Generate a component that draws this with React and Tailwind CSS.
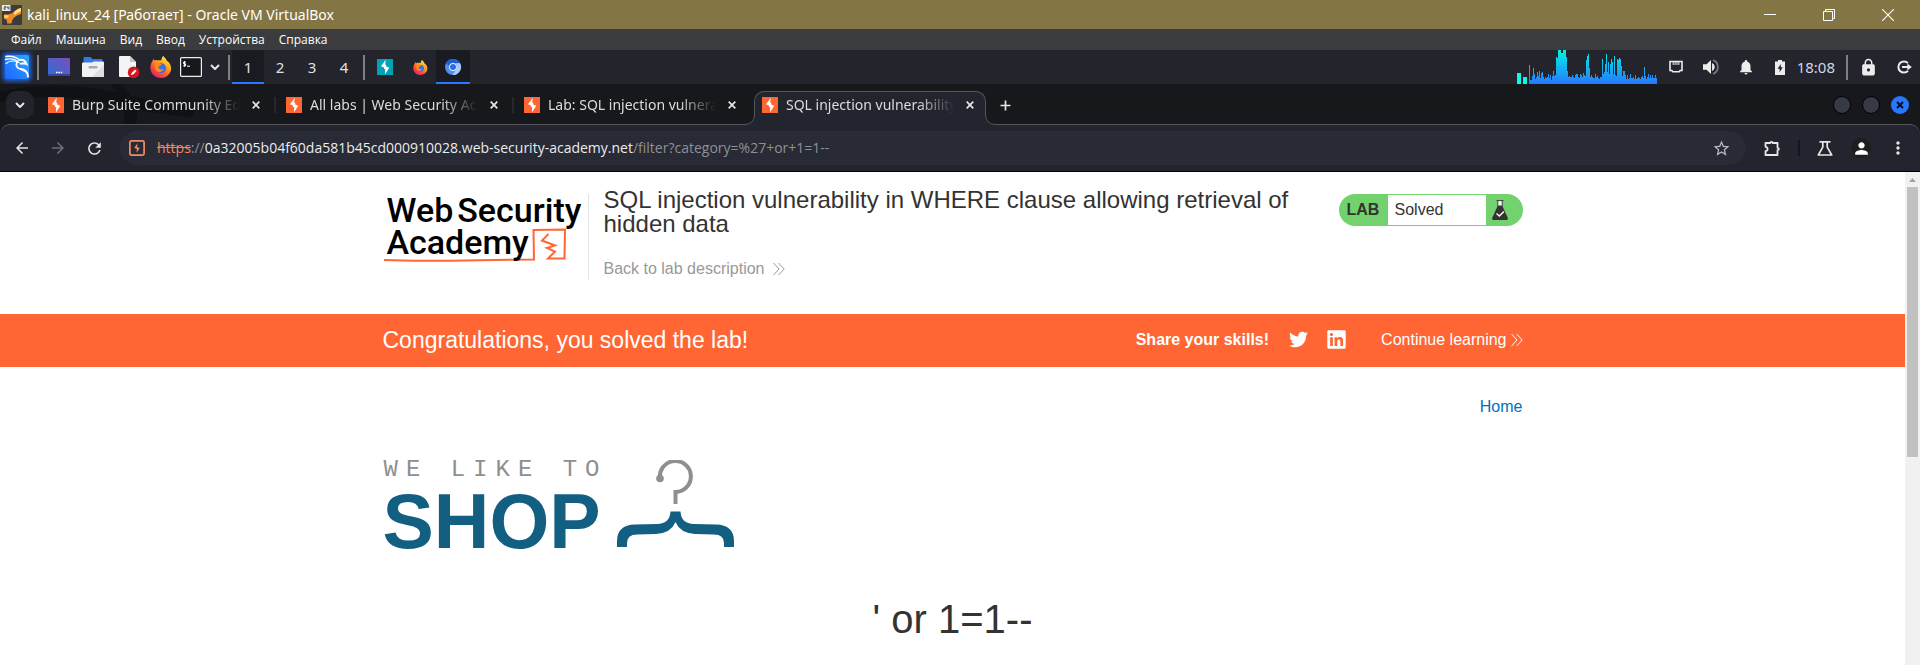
import React from "react";
import { FaTwitter, FaLinkedin } from "react-icons/fa";
import {
  MdArrowBack,
  MdArrowForward,
  MdRefresh,
  MdStarBorder,
  MdMoreVert,
  MdPerson,
  MdNotifications,
  MdLock,
} from "react-icons/md";

function BurpIcon({ bg, bolt = "#fff" }) {
  return (
    <svg width="16" height="16" viewBox="0 0 16 16" className="shrink-0" aria-hidden="true">
      <rect width="16" height="16" fill={bg} />
      <path d="M8.7 0.8 L4 7.2 L7 8.6 L7 10 L8.2 10 L8 15.2 L12.3 8.8 L9.2 7.4 L9.2 6 L8.2 5.6 Z" fill={bolt} />
    </svg>
  );
}

function VirtualBoxIcon() {
  return (
    <svg width="20" height="20" viewBox="0 0 20 20" className="shrink-0" aria-hidden="true">
      <rect width="20" height="20" rx="1" fill="#3d3a3a" />
      <path d="M19 3 C14 4 13 6 10.5 8 C8.5 9 6 9.5 2 9.5 L2 14 C5 14 5.5 16 5 18.5 L9.5 18.5 C10 15 11 13 13.5 11.5 C15.5 10 17 9.5 19 9 Z" fill="#f08a24" />
      <path d="M19 3 C15 4 14 5.5 11.5 8 L13 10 C15 8 17 7 19 6.5 Z" fill="#ffe07a" />
      <path d="M2 10 L7 10.5 L5.5 13 L2 12.5 Z" fill="#ffcf6a" />
      <rect x="0" y="0" width="8.5" height="6" fill="#e9ecef" />
      <path d="M2 1.6h1.6v1.2h-1.6v1.4h1.8M5.2 1.4v1.6h1.8v1.6M7 1.4v1.6" stroke="#384048" strokeWidth=".8" fill="none" />
    </svg>
  );
}

function KaliIcon() {
  return (
    <svg width="34" height="34" viewBox="0 0 34 34" aria-hidden="true">
      <defs>
        <linearGradient id="kali" x1="1" y1="0" x2="0" y2="1">
          <stop offset="0" stopColor="#2aa6ff" />
          <stop offset="1" stopColor="#1f66ff" />
        </linearGradient>
        <filter id="glow" x="-30%" y="-30%" width="160%" height="160%">
          <feGaussianBlur stdDeviation="2" />
        </filter>
      </defs>
      <rect x="3" y="3" width="28" height="28" rx="4" fill="#1b6dff" opacity=".9" filter="url(#glow)" />
      <rect x="5" y="5" width="24" height="24" rx="2" fill="url(#kali)" />
      <g fill="none" stroke="#fff" strokeLinecap="round">
        <path d="M6 6.500 C11 5.800 16 7 19.5 10" strokeWidth="1.600" />
        <path d="M5.500 9.500 C10 8.300 15 9 18 11.500" strokeWidth="1.300" />
        <path d="M6 13.500 C9 10.800 14 10.400 19 12.400" strokeWidth="1.100" />
        <path d="M19 10 C23 9 25.5 11 26.5 14 C24.5 13 22.5 13.8 20.5 13.600" strokeWidth="1.900" />
        <path d="M17 12 C15.5 16 17 18.6 21 19 C25 19.4 27.600 22 28 26.500" strokeWidth="1.900" />
        <path d="M20 19 C23 21 25.500 22 27.500 22.500" strokeWidth="1" />
      </g>
    </svg>
  );
}

function FirefoxIcon({ size }) {
  return (
    <svg width={size} height={size} viewBox="0 0 22 22" aria-hidden="true">
      <defs>
        <linearGradient id="ffx" x1=".85" y1=".05" x2=".2" y2="1">
          <stop offset="0" stopColor="#fff04f" />
          <stop offset=".35" stopColor="#ffa320" />
          <stop offset=".7" stopColor="#ff4a37" />
          <stop offset="1" stopColor="#e3157b" />
        </linearGradient>
      </defs>
      <path d="M13.2 0 C15 1.6 16.4 3.2 16.9 5 C18.4 5.6 19.4 7 19.9 8 C21 10 21.4 12 21 14 C20 18.6 16 22 11 22 C5 22 .6 17.8 .4 12 C.3 9 1.4 6.6 2.6 5 L3 3 L4.8 4.6 C6 3.8 7 4 8 4.6 C9.4 3.6 10.4 4.6 11.4 4.2 C11.4 2.4 12.2 1 13.2 0Z" fill="url(#ffx)" />
      <circle cx="11.2" cy="12.2" r="4.9" fill="#3e6fe0" />
      <path d="M5 7.4 C7 6.6 9 7.4 11.6 8.2 C11 10 9 9.6 8.4 11 C8.6 13.4 11 14 13.4 13 C12.6 16 8.6 17.4 6 14.4 C4.6 12.4 4.4 9.6 5 7.4Z" fill="#ff8a1e" />
    </svg>
  );
}

function ChromiumIcon() {
  return (
    <svg width="16" height="16" viewBox="0 0 16 16" aria-hidden="true">
      <circle cx="8" cy="8" r="8" fill="#4f8df0" />
      <path d="M8 0 A8 8 0 0 1 15 4.2 L8 4.2 A4 4 0 0 0 4.2 7.2 L1 4.2 A8 8 0 0 1 8 0Z" fill="#1f5fd0" />
      <path d="M15 4.2 A8 8 0 0 1 7.6 16 L11.4 10 A4 4 0 0 0 10.6 4.2Z" fill="#a9cbfb" />
      <circle cx="8" cy="8" r="3.9" fill="#e8f0fe" />
      <circle cx="8" cy="8" r="3" fill="#2a6be0" />
    </svg>
  );
}

function DesktopIcon() {
  return (
    <svg width="22" height="18" viewBox="0 0 22 18" aria-hidden="true">
      <defs>
        <linearGradient id="desk" x1="0" y1="1" x2="1" y2="0">
          <stop offset="0" stopColor="#2f6fd8" />
          <stop offset="1" stopColor="#7a4fb8" />
        </linearGradient>
      </defs>
      <rect width="22" height="18" rx="1" fill="url(#desk)" />
      <rect y="16" width="22" height="2" fill="#3d3f9c" />
      <path d="M8 14.5h1.6M10.4 14.5h1.6M12.8 14.5h1.4" stroke="#fff" strokeWidth="1.4" />
    </svg>
  );
}

function FolderIcon() {
  return (
    <svg width="22" height="20" viewBox="0 0 22 20" aria-hidden="true">
      <path d="M1.5 1 Q1.5 0 2.5 0 H8.5 L10.5 2 H19.5 Q20.5 2 20.5 3 V8 H1.5Z" fill="#3578ea" />
      <path d="M0 6.5 Q0 5.5 1 5.5 H10 L12 4.5 H21 Q22 4.5 22 5.5 V19 Q22 20 21 20 H1 Q0 20 0 19Z" fill="#f1f1f1" />
      <path d="M22 8 V19 Q22 20 21 20 H10Z" fill="#dedede" />
      <rect x="6.5" y="9" width="9" height="2.4" rx="1" fill="#a9a9a9" />
    </svg>
  );
}

function DocumentIcon() {
  return (
    <svg width="22" height="23" viewBox="0 0 22 23" aria-hidden="true">
      <path d="M1 1 Q1 0 2 0 H12 L18 6 V20 Q18 21 17 21 H2 Q1 21 1 20Z" fill="#f4f4f4" />
      <path d="M12 0 L18 6 H12Z" fill="#c4c4c4" />
      <circle cx="15.6" cy="16.4" r="5.8" fill="#d8141c" />
      <path d="M13 19 L13.6 16.9 L17 13.5 L18.6 15 L15.2 18.4Z" fill="#fff" />
    </svg>
  );
}

function TerminalIcon() {
  return (
    <svg width="22" height="20" viewBox="0 0 22 20" aria-hidden="true">
      <rect x=".6" y=".6" width="20.8" height="18.8" rx="1" fill="#17181c" stroke="#eee" strokeWidth="1.2" />
      <path d="M5.8 5 H3.6 V6.8 H5.6 V8.8 H3.2 M4.6 4 V9.8 M7 9.2 H10" stroke="#fff" strokeWidth="1" fill="none" />
    </svg>
  );
}

function Chevron({ className }) {
  return (
    <svg width="10" height="6" viewBox="0 0 10 6" className={className} aria-hidden="true">
      <path d="M1 1 L5 5 L9 1" fill="none" stroke="#e6e6e6" strokeWidth="2" />
    </svg>
  );
}

function DoubleArrow({ className }) {
  return (
    <svg width="12" height="14" viewBox="0 0 12 14" className={className} aria-hidden="true">
      <path d="M.6 1 L6 7 L.6 13 M5.6 1 L11.2 7 L5.6 13" fill="none" stroke="currentColor" strokeWidth="1" />
    </svg>
  );
}

const LOAD = [
  19, 4, 4, 8, 16, 10, 5, 7, 12, 8, 13, 6, 11, 12, 7, 5, 7, 6, 7, 10, 6, 9, 4, 8, 13, 8, 9, 27, 26, 34, 34, 34, 31, 31, 34, 34, 34, 27, 13, 7, 8,
  7, 7, 9, 7, 6, 9, 10, 10, 7, 6, 10, 9, 7, 11, 9, 8, 24, 28, 30, 16, 7, 9, 7, 6, 6, 10, 7, 8, 6, 5, 7, 7, 25, 10, 12, 20, 30, 12, 22, 10, 20, 25,
  22, 10, 28, 9, 8, 25, 24, 26, 25, 18, 8, 13, 13, 9, 5, 9, 5, 6, 10, 6, 6, 7, 5, 9, 5, 6, 7, 6, 5, 7, 8, 6, 17, 8, 5, 7, 10, 6, 9, 6, 9, 6, 6, 9, 6,
];

function LoadGraph() {
  return (
    <svg width="140" height="34" viewBox="0 0 140 34" aria-hidden="true">
      <defs>
        <linearGradient id="load" gradientUnits="userSpaceOnUse" x1="0" y1="0" x2="0" y2="34">
          <stop offset="0" stopColor="#00f5e0" />
          <stop offset="1" stopColor="#2777ff" />
        </linearGradient>
      </defs>
      <rect x="0" y="23" width="4" height="11" fill="#00ffe5" />
      <rect x="6" y="27" width="4" height="7" fill="#00ffe5" />
      <path d={LOAD.map((h, i) => `M${12 + i} 34v${-h}h1v${h}z`).join("")} fill="url(#load)" shapeRendering="crispEdges" />
    </svg>
  );
}

function TitleBar() {
  return (
    <header className="flex h-[29px] items-center justify-between bg-[#847545] pl-0.5 text-white">
      <div className="flex items-center gap-[5px]">
        <VirtualBoxIcon />
        <span className="font-['Noto_Sans',sans-serif] text-[14px] leading-5">kali_linux_24 [Работает] - Oracle VM VirtualBox</span>
      </div>
      <div className="flex h-full pr-[3px]">
        <button aria-label="Minimize" className="flex w-[59px] items-center justify-center">
          <svg width="12" height="12" viewBox="0 0 12 12"><path d="M0 5.5h12" stroke="#fff" /></svg>
        </button>
        <button aria-label="Restore" className="flex w-[59px] items-center justify-center">
          <svg width="12" height="12" viewBox="0 0 12 12" fill="none" stroke="#fff"><path d="M.5 2.5h9v9h-9zM2.5 2.5v-2h9v9h-2" /></svg>
        </button>
        <button aria-label="Close" className="flex w-[59px] items-center justify-center">
          <svg width="12" height="12" viewBox="0 0 12 12"><path d="M0 0L12 12M12 0L0 12" stroke="#fff" strokeWidth="1.1" /></svg>
        </button>
      </div>
    </header>
  );
}

const MENU = ["Файл", "Машина", "Вид", "Ввод", "Устройства", "Справка"];

function MenuBar() {
  return (
    <nav className="flex h-[21px] items-center gap-[14px] bg-[#3b3c3d] pl-[11px] font-['Open_Sans',sans-serif] text-[12px] leading-4 text-white">
      {MENU.map((m) => (
        <button key={m}>{m}</button>
      ))}
    </nav>
  );
}

function Divider() {
  return <span className="h-[25px] w-0.5 shrink-0 bg-[#808083]" />;
}

function Panel() {
  return (
    <div className="flex h-[34px] items-center justify-between bg-[#23242c] font-['Noto_Sans',sans-serif] text-[15px] text-[#e0e0e0]">
      <div className="flex h-full items-center">
        <button aria-label="Applications" className="w-[37px]"><KaliIcon /></button>
        <Divider />
        <div className="flex items-center gap-2 pr-2 pl-[9px]">
          <button aria-label="Show desktop" className="mr-1"><DesktopIcon /></button>
          <button aria-label="Files" className="mr-1.5"><FolderIcon /></button>
          <button aria-label="Text editor" className="mr-0.5"><DocumentIcon /></button>
          <button aria-label="Firefox"><FirefoxIcon size={22} /></button>
          <button aria-label="Terminal"><TerminalIcon /></button>
          <button aria-label="More terminals"><Chevron /></button>
        </div>
        <Divider />
        <div className="ml-0.5 flex h-full">
          <button className="w-8 border-b-2 border-[#2777ff] bg-[#191b21] pt-0.5">1</button>
          <button className="w-8">2</button>
          <button className="w-8">3</button>
          <button className="w-8">4</button>
        </div>
        <span className="w-[3px]" />
        <Divider />
        <div className="flex h-full">
          <button aria-label="Burp Suite" className="flex w-10 items-center justify-center"><BurpIcon bg="#00a3b5" /></button>
          <button aria-label="Firefox window" className="flex w-[31px] items-center justify-center"><FirefoxIcon size={15} /></button>
          <button aria-label="Chromium window" className="flex w-[34px] items-center justify-center border-b-2 border-[#2777ff] bg-[#191b21] pt-0.5"><ChromiumIcon /></button>
        </div>
      </div>

      <div className="flex h-full items-center text-[#ececec]">
        <LoadGraph />
        <button aria-label="Network" className="ml-3">
          <svg width="14" height="14" viewBox="0 0 14 14"><path d="M1 1.500h12v9h-1.800l-1 1.300h-6.400l-1-1.300h-1.800z" fill="none" stroke="currentColor" strokeWidth="1.6" /><path d="M4.2 2v3M6.1 2v3M8 2v3M9.9 2v3" stroke="currentColor" /></svg>
        </button>
        <button aria-label="Volume" className="ml-5">
          <svg width="17" height="16" viewBox="0 0 17 16"><path d="M0 5.2h3.6L8 1v14l-4.4-4.2H0z" fill="currentColor" /><path d="M9.6 4.6a4.4 4.4 0 0 1 0 6.8z" fill="currentColor" stroke="currentColor" /><path d="M10 1.2a7.2 7.2 0 0 1 0 13.6" fill="none" stroke="#77787c" strokeWidth="1.8" /></svg>
        </button>
        <button aria-label="Notifications" className="ml-[17px]"><MdNotifications size={18} /></button>
        <button aria-label="Battery" className="ml-5">
          <svg width="10" height="15" viewBox="0 0 10 15"><path d="M3 0h4v1.4h3V15H0V1.4h3z" fill="currentColor" /><path d="M5.8 4L2.6 8.8h2v3.4l3.2-5h-2z" fill="#23242c" /></svg>
        </button>
        <span className="ml-3 text-[#cfd6e4]">18:08</span>
        <span className="w-[11px]" />
        <Divider />
        <button aria-label="Lock" className="ml-[11px]"><MdLock size={19} /></button>
        <button aria-label="Log out" className="mr-2 ml-[19px]">
          <svg width="15" height="14" viewBox="0 0 15 14"><path d="M11 10.9A5.6 5.6 0 1 1 11 3.1" fill="none" stroke="currentColor" strokeWidth="2" /><path d="M5 7h6" stroke="currentColor" strokeWidth="2" /><path d="M10.4 3.4L14.8 7l-4.4 3.6z" fill="currentColor" /></svg>
        </button>
      </div>
    </div>
  );
}

const TABS = [
  { title: "Burp Suite Community Edition" },
  { title: "All labs | Web Security Academy" },
  { title: "Lab: SQL injection vulnerability" },
  { title: "SQL injection vulnerability in WHERE", active: true },
];

function Flare({ className }) {
  return (
    <svg width="11" height="11" viewBox="0 0 11 11" className={className} aria-hidden="true">
      <path d="M0 10.5 Q10.5 10.5 10.5 0 L11 0 V11 H0Z" fill="#23252e" />
      <path d="M0 10.5 Q10.5 10.5 10.5 0" fill="none" stroke="#55565c" />
    </svg>
  );
}

function Tab({ title, active, separated }) {
  return (
    <div
      className={
        active
          ? "relative z-10 -mb-px flex w-[232px] items-center rounded-t-[10px] border border-b-0 border-[#55565c] bg-[#23252e] px-[7px] pb-[7px]"
          : "mr-1.5 flex w-[232px] items-center px-2 pb-[5px]"
      }
    >
      {active && <Flare className="absolute bottom-0 -left-[11px]" />}
      <BurpIcon bg="#ff6633" />
      <a href="#tab" className="ml-2 w-[168px] overflow-hidden whitespace-nowrap text-[#dcdcdc] [mask-image:linear-gradient(to_right,black_78%,transparent)]">
        {title}
      </a>
      <button aria-label="Close tab" className="ml-3">
        <svg width="8" height="8" viewBox="0 0 8 8"><path d="M.7.7L7.3 7.3M7.3.7L.7 7.3" stroke="#e6e6e6" strokeWidth="1.7" /></svg>
      </button>
      {separated && <span className="-mr-3 ml-[14px] h-4 w-0.5 bg-[#262831]" />}
      {active && <Flare className="absolute -right-[11px] bottom-0 -scale-x-100" />}
    </div>
  );
}

function TabStrip() {
  return (
    <div className="relative flex h-10 bg-[#17181c] pt-[7px] pl-1.5 font-['Noto_Sans',sans-serif] text-[14px] leading-5">
      <svg width="210" height="40" viewBox="0 0 210 40" className="absolute top-0 left-0" aria-hidden="true">
        <path d="M0 8 C40 -2 90 0 130 12 L196 24 L192 34 L150 28 C110 18 60 6 0 18Z" fill="#101115" />
        <path d="M120 0 C134 12 140 24 136 40 L124 40 C126 24 122 10 110 0Z" fill="#101115" />
      </svg>
      <button aria-label="Search tabs" className="relative mr-1.5 flex h-7 w-7 items-center justify-center rounded-[10px] bg-[#22242b]">
        <Chevron />
      </button>
      {TABS.map((t, i) => (
        <Tab key={t.title} {...t} separated={i < 2} />
      ))}
      <button aria-label="New tab" className="ml-[14px] flex h-7 items-center">
        <svg width="11" height="11" viewBox="0 0 11 11"><path d="M5.5 .5v10M.5 5.5h10" stroke="#e6e6e6" strokeWidth="1.7" /></svg>
      </button>
      <div className="mr-[11px] ml-auto flex h-7 items-center gap-[11px]">
        <button aria-label="Minimize browser" className="h-[18px] w-[18px] rounded-full border border-black bg-[#363a46]" />
        <button aria-label="Maximize browser" className="h-[18px] w-[18px] rounded-full border border-black bg-[#363a46]" />
        <button aria-label="Close browser" className="flex h-[18px] w-[18px] items-center justify-center rounded-full bg-[#2777ff]">
          <svg width="8" height="8" viewBox="0 0 8 8"><path d="M1 1L7 7M7 1L1 7" stroke="#0b1020" strokeWidth="2" /></svg>
        </button>
      </div>
    </div>
  );
}

function Toolbar() {
  return (
    <div className="bg-[#17181c]">
      <div className="flex h-12 items-center rounded-t-[10px] border-t border-b border-t-[#55565c] border-b-black bg-[#23252e] pr-3 pl-[13px] text-[#e6e6e6]">
        <button aria-label="Back" className="w-9"><MdArrowBack size={18} /></button>
        <button aria-label="Forward" className="w-9 text-[#6f7077]"><MdArrowForward size={18} /></button>
        <button aria-label="Reload" className="w-[35px]"><MdRefresh size={19} /></button>
        <div className="flex h-[34px] min-w-0 flex-1 items-center rounded-full bg-[#282a35] pr-[15px] pl-[9px] font-['Open_Sans',sans-serif] text-[14px] leading-5 whitespace-nowrap">
          <svg width="16" height="16" viewBox="0 0 16 16" className="mr-3 shrink-0" aria-hidden="true">
            <rect x=".9" y=".9" width="14.2" height="14.2" rx="1.5" fill="none" stroke="#f28b66" strokeWidth="1.7" />
            <path d="M8.4 3.2L5.2 8l2.6.8-.2 4 3.2-4.8-2.6-.8z" fill="#f28b66" />
          </svg>
          <a href="#url" className="text-[#8f9097]">
            <span className="text-[#f08560] line-through">https</span>://<span className="text-[#ececec]">0a32005b04f60da581b45cd000910028.web-security-academy.net</span>/filter?category=%27+or+1=1--
          </a>
          <button aria-label="Bookmark" className="ml-auto text-[#b9b9bd]"><MdStarBorder size={19} /></button>
        </div>
        <button aria-label="Extensions" className="ml-[18px]">
          <svg width="17" height="17" viewBox="0 0 17 17"><path d="M1.500 3h4.800c0-1.600 2.400-1.600 2.400 0h4.800v4.800c1.800 0 1.800 2.400 0 2.400v4.800h-12v-3.800c2.800-.4 2.800-4 0-4.400z" fill="none" stroke="currentColor" strokeWidth="1.8" strokeLinejoin="round" /></svg>
        </button>
        <span className="mx-[17px] h-4 w-0.5 bg-[#15161b]" />
        <button aria-label="Labs">
          <svg width="16" height="15" viewBox="0 0 16 15"><path d="M2.5 .9h11M5.800 1v5.200L1.300 14h13.400L10.200 6.200V1" fill="none" stroke="currentColor" strokeWidth="1.7" strokeLinejoin="round" /></svg>
        </button>
        <button aria-label="Profile" className="ml-[18px] flex h-5 w-5 items-center justify-center rounded-full bg-[#1c1d1e] text-white"><MdPerson size={19} /></button>
        <button aria-label="Menu" className="ml-[17px]"><MdMoreVert size={20} /></button>
      </div>
    </div>
  );
}

function AcademyLogo() {
  return (
    <a href="#academy" className="relative block w-[206px] shrink-0 border-r border-[#e3e3e3] pl-1 font-['Roboto',sans-serif] text-[34px] leading-8 font-medium text-black">
      <svg width="190" height="36" viewBox="0 0 190 36" className="absolute top-[34px] left-0" aria-hidden="true">
        <path d="M1 32 C50 34 100 31.500 151 31.500 L150.500 2 L182 1.500 L181.500 30.500 L165 30.500 L172 23.500 L164 20 L172 17.500 L159 12.500 L165.500 6" fill="none" stroke="#ff6633" strokeWidth="2" />
      </svg>
      <span className="relative flex gap-1 whitespace-nowrap">
        <span>Web</span> <span>Security</span>
      </span>
      <span className="relative block">Academy</span>
    </a>
  );
}

function LabStatus() {
  return (
    <div className="flex h-8 w-[184px] shrink-0 items-center rounded-full bg-[#72d26d] text-[16px] leading-5 text-[#333332]">
      <strong className="w-[49px] pl-2">LAB</strong>
      <span className="flex h-[30px] w-[98px] items-center bg-white pl-[7px]">Solved</span>
      <svg width="16" height="20" viewBox="0 0 16 20" className="ml-1.5" aria-hidden="true">
        <path d="M5.800 1V6.500L1 18.500h14L10.200 6.500V1Z" fill="#fff" />
        <path d="M4.500 .6h7M5.800 1V6M10.200 1V6" stroke="#333332" strokeWidth=".9" fill="none" />
        <path d="M5.800 5.500h4.400L15.800 18q.4 2-1.500 2H1.700Q-.2 20 .2 18Z" fill="#333332" />
        <path d="M4.500 13.500L7.300 16L12 11.500" stroke="#fff" strokeWidth="1.400" fill="none" />
      </svg>
    </div>
  );
}

function ShopLogo() {
  return (
    <div className="flex items-start gap-[9px]">
      <div>
        <div className="pl-px font-['Liberation_Mono',monospace] text-[24px] leading-5 tracking-[8px] whitespace-nowrap text-[#8f8f8f]">WE LIKE TO</div>
        <div className="font-['Liberation_Sans',Arial,sans-serif] text-[77px] leading-[82px] font-bold text-[#125f82]">SHOP</div>
      </div>
      <svg width="117" height="90" viewBox="0 0 117 90" aria-hidden="true">
        <path d="M43 18.500 A15.500 15.500 0 1 1 58.500 32 V44" fill="none" stroke="#8f8f90" strokeWidth="4" />
        <circle cx="43" cy="18.500" r="3.800" fill="#8f8f90" />
        <path d="M0 87 V81 Q0 65 18 64.500 L40 64 Q53 63.500 53.500 51.500 H63.500 Q64 63.500 77 64 L99 64.500 Q117 65 117 81 V87 H107 V83 Q107 74.500 97 74.500 L78 74 Q63 73 58.500 62 Q54 73 39 74 L20 74.500 Q10 74.500 10 83 V87Z" fill="#125f82" />
      </svg>
    </div>
  );
}

function Scrollbar() {
  return (
    <div className="flex w-[15px] shrink-0 flex-col items-center bg-[#f1f1f1]" aria-hidden="true">
      <svg width="15" height="15" viewBox="0 0 15 15"><path d="M4 10L7.500 6L11 10Z" fill="#a3a3a3" /></svg>
      <span className="h-[270px] w-[11px] bg-[#c1c1c1]" />
    </div>
  );
}

function LabPage() {
  return (
    <main className="min-w-0 flex-1 bg-white font-['Liberation_Sans',Arial,sans-serif] text-[16px] leading-5 text-[#333332]">
      <section className="mx-auto flex max-w-[1140px] items-start pt-[22px] pb-[34px]">
        <div className="flex h-[86px] min-w-0 flex-1">
          <AcademyLogo />
          <div className="-mt-1.5 ml-[15px] max-w-[700px]">
            <h2 className="text-[24px] leading-6">SQL injection vulnerability in WHERE clause allowing retrieval of hidden data</h2>
            <a href="#lab" className="mt-[23px] flex items-center text-[#999999]">
              Back to lab description
              <DoubleArrow className="ml-[9px]" />
            </a>
          </div>
        </div>
        <LabStatus />
      </section>
      <section className="bg-[#ff6633] text-white">
        <div className="mx-auto flex h-[53px] max-w-[1140px] items-center pb-0.5">
          <h4 className="text-[23px] leading-7">Congratulations, you solved the lab!</h4>
          <strong className="ml-auto">Share your skills!</strong>
          <a href="#twitter" aria-label="Twitter" className="ml-5"><FaTwitter size={19} /></a>
          <a href="#linkedin" aria-label="LinkedIn" className="ml-[18px]"><FaLinkedin size={21} /></a>
          <a href="#continue" className="ml-[34px] flex items-center">
            Continue learning
            <DoubleArrow className="ml-1" />
          </a>
        </div>
      </section>
      <section className="mx-auto max-w-[1140px]">
        <nav className="flex justify-end pt-[30px]">
          <a href="#home" className="text-[#0071bc]">Home</a>
        </nav>
        <div className="pt-[43px]">
          <ShopLogo />
        </div>
        <h1 className="pt-[34px] text-center text-[40px] leading-[46px]">' or 1=1--</h1>
      </section>
    </main>
  );
}

export default function App() {
  return (
    <div className="flex min-h-screen flex-col">
      <TitleBar />
      <MenuBar />
      <Panel />
      <TabStrip />
      <Toolbar />
      <div className="flex flex-1">
        <LabPage />
        <Scrollbar />
      </div>
    </div>
  );
}
